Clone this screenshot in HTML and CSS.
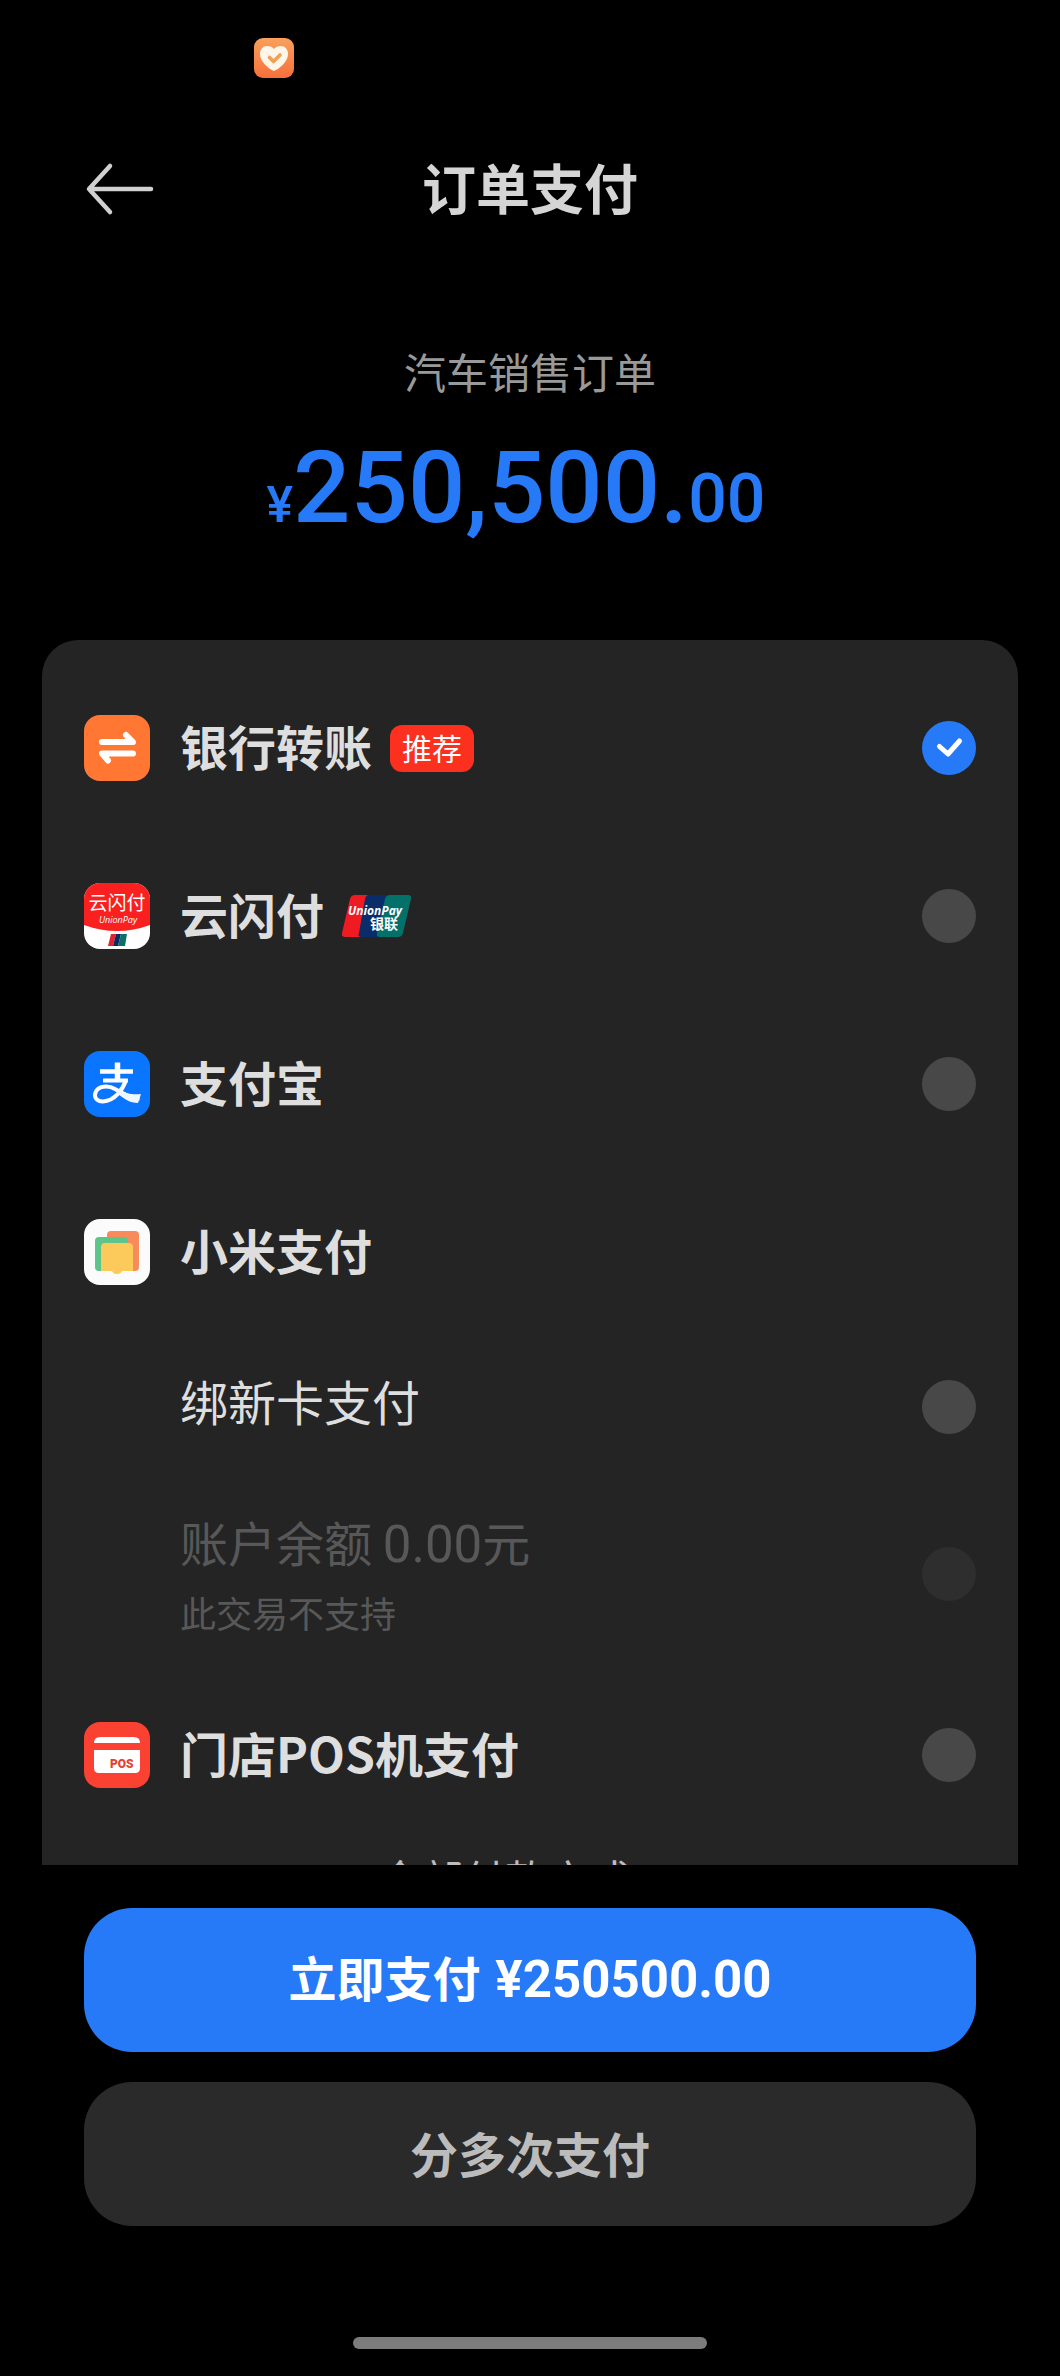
FILE: index.html
```html
<!DOCTYPE html>
<html lang="zh-CN">
<head>
<meta charset="utf-8">
<meta name="viewport" content="width=device-width, initial-scale=1">
<title>订单支付</title>
<link rel="stylesheet" href="styles.css">
</head>
<body>
<div class="status-bar">
  <svg class="status-icon" viewBox="0 0 40 40" aria-hidden="true">
    <defs><linearGradient id="heartBg" x1="0" y1="0" x2="0" y2="1"><stop offset="0" stop-color="#f9a05c"/><stop offset="1" stop-color="#f5703a"/></linearGradient></defs>
    <rect width="40" height="40" rx="9" fill="url(#heartBg)"/>
    <path d="M20 33C15 31 6 24 6 16C6 11 9 8 13 8C16 8 18.500 9 20 11C21.500 9 24 8 27 8C31 8 34 11 34 16C34 24 25 31 20 33Z" fill="#fff6ea"/>
    <path d="M15.500 19.500L19.500 23.500L26 17" fill="none" stroke="#f0a058" stroke-width="3.600" stroke-linecap="round" stroke-linejoin="round"/>
  </svg>
</div>
<header class="top-bar">
  <button class="back" type="button" aria-label="返回">
    <svg viewBox="0 0 70 54" aria-hidden="true"><path d="M26 4L5 27L26 50M6 27H67" fill="none" stroke="#d0d0d0" stroke-width="4.500" stroke-linecap="round" stroke-linejoin="round"/></svg>
  </button>
  <h1 class="page-title">订单支付</h1>
</header>
<section class="summary">
  <p class="order-name">汽车销售订单</p>
  <p class="amount"><span class="currency">¥</span><span class="whole">250,500.</span><span class="cents">00</span></p>
</section>
<main class="methods">
  <label class="method">
    <svg class="logo" viewBox="0 0 66 66" aria-hidden="true">
      <rect width="66" height="66" rx="16" fill="#ff7733"/>
      <path d="M18 27H49L42 20M49 38.500H18L24 45.500" fill="none" stroke="#fff" stroke-width="6" stroke-linecap="round" stroke-linejoin="round"/>
      <path d="M41 19V27H49ZM25 46.500V38.500H17Z" fill="#fff"/>
    </svg>
    <span class="name">银行转账</span>
    <span class="tag">推荐</span>
    <input class="pick" type="radio" name="method" checked>
  </label>
  <label class="method">
    <svg class="logo" viewBox="0 0 66 66" aria-hidden="true">
      <defs><clipPath id="tile"><rect width="66" height="66" rx="16"/></clipPath></defs>
      <g clip-path="url(#tile)">
        <rect width="66" height="66" fill="#fff"/>
        <path d="M0 0H66V42Q33 54 0 42Z" fill="#f9201f"/>
        <text class="mark-cn" x="33" y="27">云闪付</text>
        <text class="mark-en" x="34" y="40">UnionPay</text>
        <path d="M27 51H32L29 63H24Z" fill="#e0222a"/>
        <path d="M32 51H37L34 63H29Z" fill="#0b2a63"/>
        <path d="M37 51H43L41 63H34Z" fill="#0a7068"/>
      </g>
    </svg>
    <span class="name">云闪付</span>
    <svg class="union" viewBox="0 0 70 42" aria-hidden="true">
      <path d="M13 0H30L21 42H3Q-1 42 0 38L8 4Q9 0 13 0Z" fill="#f01a23"/>
      <path d="M27 0H48L38 42H20Q15 42 17 38L23 4Q24 0 27 0Z" fill="#0a2c68"/>
      <path d="M48 0H66Q70 0 69 4L61 38Q60 42 56 42H38Q34 42 35 38L43 4Q44 0 48 0Z" fill="#04706a"/>
      <text class="union-en" x="6" y="20">UnionPay</text>
      <text class="union-cn" x="28" y="34">银联</text>
    </svg>
    <input class="pick" type="radio" name="method">
  </label>
  <label class="method">
    <svg class="logo" viewBox="0 0 66 66" aria-hidden="true">
      <rect width="66" height="66" rx="16" fill="#0a76ff"/>
      <g fill="none" stroke="#fff">
        <path d="M16 20.500H49" stroke-width="4.500"/>
        <path d="M19 29.500H44" stroke-width="4"/>
        <path d="M33.500 11.500V30" stroke-width="5.500"/>
        <path d="M42 29C39 38 31 50 19 50.500C12 50.500 10 46 11.500 41.500C14 35 24 34 31 38C39 42 46 47.500 55.500 47.500" stroke-width="4"/>
      </g>
      <path d="M34 38C43 43 49 44 57 43L54 52C46 52 40 48 33 42Z" fill="#eff7ff"/>
    </svg>
    <span class="name">支付宝</span>
    <input class="pick" type="radio" name="method">
  </label>
  <section class="group">
    <div class="method">
      <svg class="logo" viewBox="0 0 66 66" aria-hidden="true">
        <rect width="66" height="66" rx="16" fill="#fbfbfb"/>
        <rect x="23" y="12" width="32" height="40" rx="4" fill="#f78b5c"/>
        <rect x="11" y="18" width="33" height="34" rx="4" fill="#5dc48a"/>
        <path d="M17 28Q17 24 21 24H45Q49 24 49 28V52H38Q37 55 33 55Q29 55 28 52H17Z" fill="#fcc95b"/>
      </svg>
      <h2 class="name">小米支付</h2>
    </div>
    <label class="method sub">
      <span class="label raised">绑新卡支付</span>
      <input class="pick" type="radio" name="method">
    </label>
    <label class="method sub balance">
      <span class="stack">
        <span class="label">账户余额 <span class="num">0.00</span>元</span>
        <span class="note">此交易不支持</span>
      </span>
      <input class="pick" type="radio" name="method" disabled>
    </label>
  </section>
  <label class="method">
    <svg class="logo" viewBox="0 0 66 66" aria-hidden="true">
      <rect width="66" height="66" rx="16" fill="#fb4232"/>
      <path d="M10 21Q10 15 16 15H50Q56 15 56 21Z" fill="#fff"/>
      <path d="M10 28H56V46Q56 51 51 51H15Q10 51 10 46Z" fill="#fff"/>
      <text class="mark-pos" x="26" y="46">POS</text>
    </svg>
    <span class="name">门店POS机支付</span>
    <input class="pick" type="radio" name="method">
  </label>
  <button class="more" type="button">全部付款方式
    <svg class="chevron" viewBox="0 0 36 36" aria-hidden="true"><path d="M8 14L18 24L28 14" fill="none" stroke="#bdbdbd" stroke-width="4" stroke-linecap="round" stroke-linejoin="round"/></svg>
  </button>
</main>
<footer class="actions">
  <button class="action primary" type="button">立即支付 <span class="num">¥250500.00</span></button>
  <button class="action" type="button">分多次支付</button>
  <div class="home-bar"></div>
</footer>
</body>
</html>
```

FILE: styles.css
```css
* { box-sizing: border-box; }

body {
  margin: 0;
  height: 100vh;
  display: flex;
  flex-direction: column;
  background: #000;
  color: #dedede;
  font-family: "Noto Sans CJK SC", sans-serif;
  font-size: 48px;
  line-height: 72px;
}

h1, h2, p { margin: 0; }

button {
  border: 0;
  padding: 0;
  background: none;
  color: inherit;
  font: inherit;
}

.status-bar {
  flex: none;
  padding: 38px 254px 0;
}

.status-icon {
  display: block;
  width: 40px;
  height: 40px;
}

.top-bar {
  flex: none;
  display: grid;
  grid-template-columns: 1fr auto 1fr;
  align-items: center;
  padding: 71px 84px 0;
}

.back {
  width: 72px;
  height: 80px;
  display: flex;
  align-items: center;
}

.back svg {
  width: 70px;
  height: 54px;
}

.page-title {
  padding-bottom: 4px;
  color: #d5d5d5;
  font-size: 54px;
  line-height: 76px;
  font-weight: 700;
}

.summary {
  flex: none;
  height: 411px;
  padding-top: 112px;
  text-align: center;
}

.order-name {
  color: #999;
  font-size: 42px;
  line-height: 60px;
}

.amount {
  display: flex;
  justify-content: center;
  align-items: baseline;
  padding: 12px 28px 0 0;
  color: #277af7;
  font-family: Roboto, sans-serif;
  font-weight: 500;
  line-height: 150px;
}

.currency { font-size: 50px; }
.whole { font-size: 101px; }
.cents { font-size: 68px; }

.methods {
  flex: 1 1 0;
  overflow: hidden;
  margin: 0 42px;
  padding: 24px 42px 0;
  border-radius: 36px 36px 0 0;
  background: #242424;
}

.method {
  display: flex;
  align-items: center;
  height: 168px;
}

.logo {
  flex: none;
  width: 66px;
  height: 66px;
  margin-right: 30px;
}

.name {
  padding-bottom: 6px;
  font-size: 48px;
  font-weight: 700;
}

.tag {
  margin-left: 18px;
  padding: 0 12px 2px;
  border-radius: 12px;
  background: #fb301e;
  color: #fff;
  font-size: 30px;
  line-height: 45px;
}

.union {
  width: 70px;
  height: 42px;
  margin-left: 18px;
}

.mark-cn, .mark-en, .mark-pos, .union-en, .union-cn { fill: #fff; }
.mark-cn { font-size: 19px; text-anchor: middle; }
.mark-en { font: italic 9px "Open Sans", sans-serif; text-anchor: middle; }
.mark-pos { fill: #e8402f; font: 900 12px Roboto, sans-serif; }
.union-en { font: italic 700 12px "Open Sans", sans-serif; }
.union-cn { font-size: 14px; font-weight: 700; }

.pick {
  appearance: none;
  flex: none;
  width: 54px;
  height: 54px;
  margin: 0 0 0 auto;
  border-radius: 50%;
  background: #484848;
}

.pick:checked {
  background: #277af7 url("data:image/svg+xml,%3Csvg xmlns='http://www.w3.org/2000/svg' viewBox='0 0 54 54'%3E%3Cpath d='M17.500 25.500L26 33L37.500 20' fill='none' stroke='white' stroke-width='5' stroke-linecap='round' stroke-linejoin='round'/%3E%3C/svg%3E");
}

.pick:disabled { background: #2e2e2e; }

.sub {
  height: 141px;
  padding-left: 96px;
}

.raised { padding-bottom: 14px; }

.balance {
  height: 194px;
  color: #585858;
}

.stack {
  display: flex;
  flex-direction: column;
}

.note {
  font-size: 36px;
  line-height: 62px;
}

.num {
  font-family: Roboto, sans-serif;
  font-size: 51px;
}

.more {
  display: flex;
  align-items: center;
  justify-content: center;
  gap: 14px;
  width: 100%;
  margin-top: 9px;
  color: #bdbdbd;
  font-size: 42px;
  line-height: 60px;
}

.chevron {
  width: 36px;
  height: 36px;
}

.actions {
  flex: none;
  display: flex;
  flex-direction: column;
  gap: 30px;
  padding: 43px 84px 27px;
}

.action {
  height: 144px;
  padding-bottom: 4px;
  border-radius: 48px;
  background: #2a2a2a;
  color: #bcbcbc;
  font-weight: 700;
}

.primary {
  background: #277af7;
  color: #fff;
}

.primary .num { margin-left: 4px; }

.home-bar {
  width: 100%;
  max-width: 354px;
  height: 12px;
  margin: 81px auto 0;
  border-radius: 6px;
  background: #7c7c7c;
}
```
